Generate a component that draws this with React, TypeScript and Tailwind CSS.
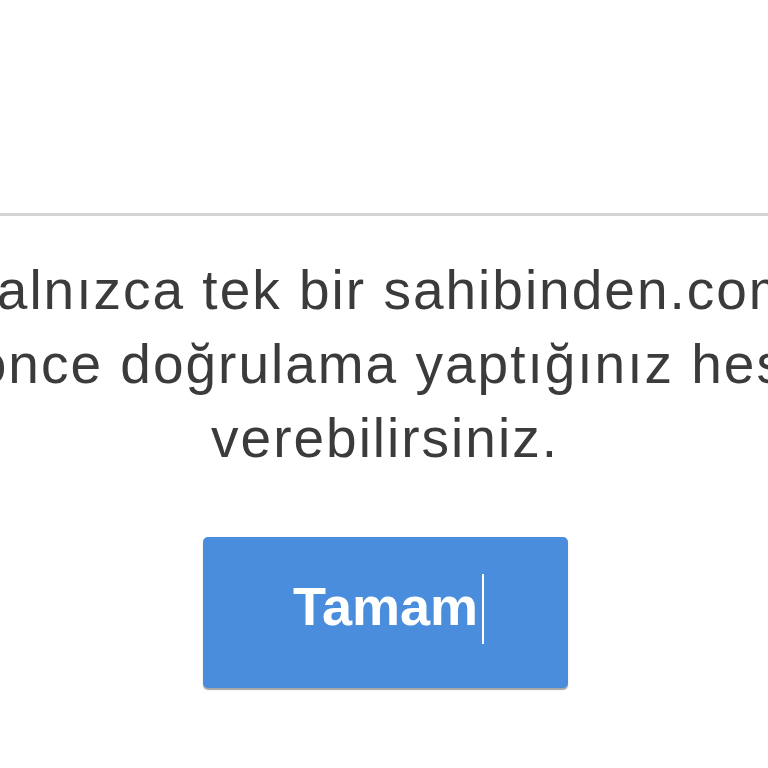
import React from "react";

export default function App() {
  return (
    <div className="w-[768px] h-[768px] bg-white overflow-hidden" style={{ fontFamily: '"Liberation Sans", Arial, sans-serif' }}>
      <div className="h-[213px]" />
      <div className="h-[3px] bg-[#d4d4d4]" />
      <div className="pt-[37px] text-[#3b3b3b] text-[55px] leading-[74px] tracking-[2px]">
        <div className="whitespace-nowrap ml-[-111px]">ile yalnızca tek bir sahibinden.com hesabı</div>
        <div className="whitespace-nowrap ml-[-181px]">Daha önce doğrulama yaptığınız hesabınıza</div>
        <div className="whitespace-nowrap text-center pl-[2px]">verebilirsiniz.</div>
      </div>
      <div className="flex justify-center pt-[62px] pl-[3px]">
        <button className="w-[365px] h-[151px] bg-[#4a8ddc] rounded-[5px] shadow-[0_2px_1px_rgba(0,0,0,0.35)] flex items-center justify-center pb-[12px] text-white text-[54px] font-bold">
          <span className="relative">Tamam<span className="absolute right-[-6px] top-[8px] w-[2px] h-[70px] bg-white" /></span>
        </button>
      </div>
    </div>
  );
}
